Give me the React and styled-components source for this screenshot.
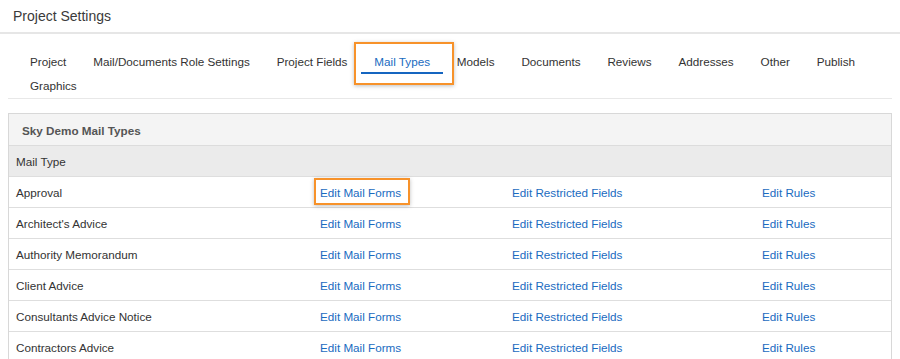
import React from 'react'
import styled, { createGlobalStyle } from 'styled-components'

const GlobalStyle = createGlobalStyle`
    html, body {
        margin: 0;
        padding: 0;
        overflow: hidden;
        background: #fff;
        font-family: "Liberation Sans", Arial, Helvetica, sans-serif;
        color: #333;
    }
`

const tabs = ['Project', 'Mail/Documents Role Settings', 'Project Fields', 'Mail Types', 'Models', 'Documents', 'Reviews', 'Addresses', 'Other', 'Publish', 'Graphics']

const mailTypes = ['Approval', "Architect's Advice", 'Authority Memorandum', 'Client Advice', 'Consultants Advice Notice', 'Contractors Advice']

export const Header = styled.header`
    height: 32px;
    display: flex;
    align-items: center;
    padding-left: 13px;
    font-size: 14px;
    color: #3a3a3a;
    border-bottom: 2px solid #e6e6e6;
`
export const TabBar = styled.nav`
    display: flex;
    flex-wrap: wrap;
    margin: 16px 8px 0;
    padding: 0 0 0 8.5px;
    border-bottom: 1px solid #e8e8e8;
`
export const Tab = styled.div`
    position: relative;
    padding: 3px 13.45px 1px;
    line-height: 18px;
    font-size: 11.7px;
    color: ${({ active }) => (active ? '#1a6bbf' : '#333')};
    border-bottom: 2px solid ${({ active }) => (active ? '#1565c0' : 'transparent')};
    cursor: pointer;
`
export const Highlight = styled.span`
    position: absolute;
    left: ${({ inset }) => inset.l}px;
    right: ${({ inset }) => inset.r}px;
    top: ${({ inset }) => inset.t}px;
    bottom: ${({ inset }) => inset.b}px;
    border: 2px solid #f7922a;
    box-shadow: 0 1px 4px rgba(0, 0, 0, 0.25);
    pointer-events: none;
`
export const Panel = styled.section`
    margin: 14px 8px 0;
    border: 1px solid #d8d8d8;
    border-bottom: none;
`
export const PanelTitle = styled.div`
    height: 32px;
    display: flex;
    align-items: center;
    padding: 2px 0 0 13px;
    box-sizing: border-box;
    background: #f4f4f4;
    font-size: 11.7px;
    font-weight: bold;
    color: #555;
    border-bottom: 1px solid #dcdcdc;
`
export const Row = styled.div`
    display: grid;
    grid-template-columns: 304px 192px 250px 1fr;
    align-items: center;
    height: 30px;
    padding-left: 7px;
    font-size: 11.7px;
    color: #333;
    background: ${({ head }) => (head ? '#ebebeb' : '#fff')};
    border-bottom: 1px solid #dedede;
`
export const Cell = styled.div`
    white-space: nowrap;
`
export const LinkText = styled.a`
    position: relative;
    display: inline-block;
    color: #1a6bbf;
    text-decoration: none;
    cursor: pointer;
`

const App = () => {
    return (
        <>
            <GlobalStyle />
            <Header>Project Settings</Header>
            <TabBar>
                {tabs.map((t) => (
                    <Tab key={t} active={t === 'Mail Types'}>
                        {t}
                        {t === 'Mail Types' && <Highlight inset={{ l: -7, r: -11, t: -8, b: -13 }} />}
                    </Tab>
                ))}
            </TabBar>
            <Panel>
                <PanelTitle>Sky Demo Mail Types</PanelTitle>
                <Row head>
                    <Cell>Mail Type</Cell>
                </Row>
                {mailTypes.map((m, i) => (
                    <Row key={m}>
                        <Cell>{m}</Cell>
                        <Cell>
                            <LinkText>
                                Edit Mail Forms
                                {i === 0 && <Highlight inset={{ l: -6, r: -9, t: -8, b: -6 }} />}
                            </LinkText>
                        </Cell>
                        <Cell><LinkText>Edit Restricted Fields</LinkText></Cell>
                        <Cell><LinkText>Edit Rules</LinkText></Cell>
                    </Row>
                ))}
            </Panel>
        </>
    )
}

export default App
